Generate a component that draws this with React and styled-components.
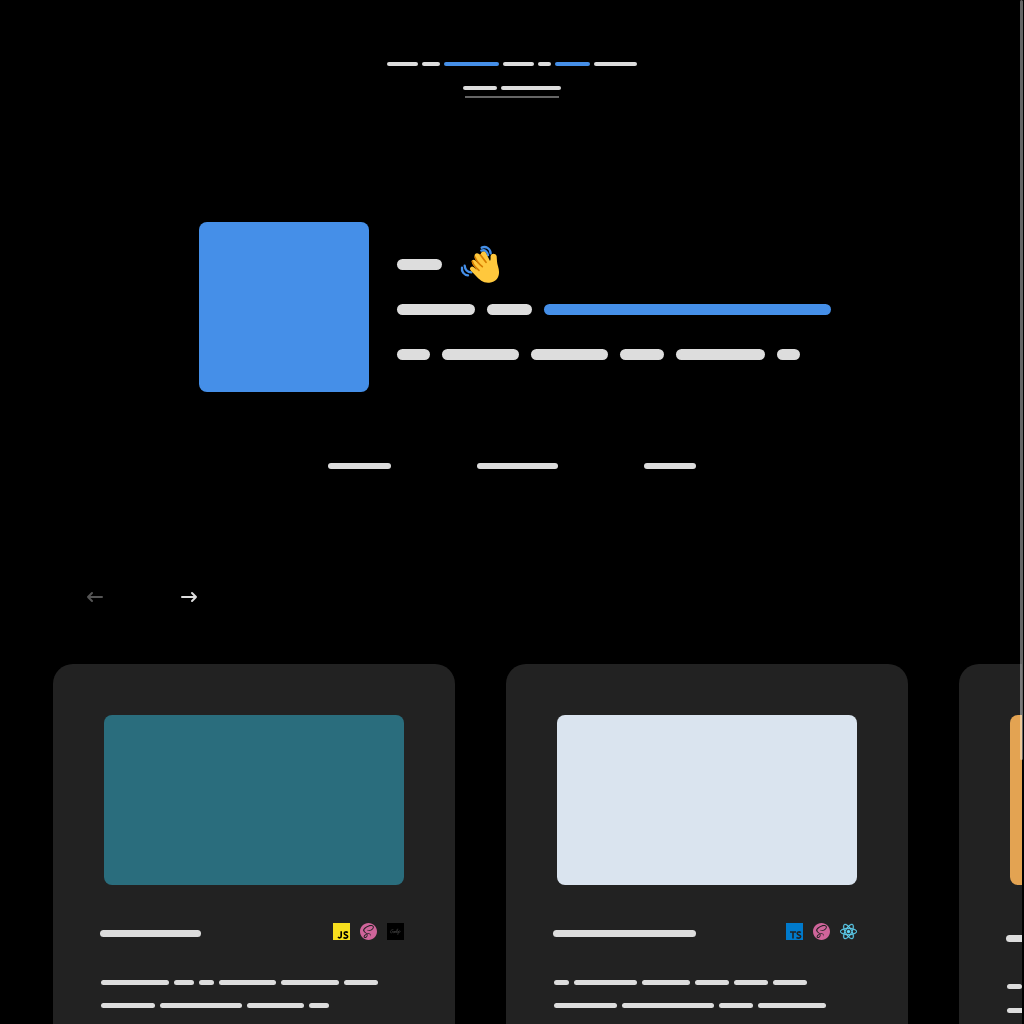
import React from "react";
import styled, { createGlobalStyle } from "styled-components";
import { SiSass, SiReact } from "react-icons/si";

const GlobalStyle = createGlobalStyle`
  * { box-sizing: border-box; }
  body {
    margin: 0;
    background: #000;
    color: #ddd;
    font-family: "Open Sans", sans-serif;
  }
`;

const Page = styled.div`
  height: 100vh;
  overflow: hidden;
  background: #000;
`;

const ScrollThumb = styled.div`
  position: fixed;
  top: 0;
  right: 1px;
  width: 3px;
  height: 760px;
  border-radius: 2px;
  background: rgba(255, 255, 255, 0.4);
  z-index: 2;
`;

const Bar = styled.span`
  display: block;
  flex: none;
  width: ${(p) => p.$w}px;
  height: ${(p) => p.$h}px;
  border-radius: ${(p) => p.$h}px;
  background: ${(p) => (p.$accent ? "#458fe8" : "#ddd")};
`;

const Line = styled.div`
  display: flex;
  align-items: center;
  gap: ${(p) => p.$gap}px;
`;

const Notice = styled.header`
  display: flex;
  flex-direction: column;
  align-items: center;
  gap: 20px;
  padding-top: 62px;
`;

const NoticeLink = styled.a`
  display: flex;
  flex-direction: column;
  align-items: center;
  gap: 6px;
  text-decoration: none;

  &::after {
    content: "";
    width: 94px;
    height: 2px;
    background: #666;
  }
`;

const Hero = styled.section`
  display: flex;
  justify-content: center;
  align-items: center;
  gap: 28px;
  margin-top: 124px;
`;

const Portrait = styled.div`
  flex: none;
  width: 170px;
  height: 170px;
  border-radius: 8px;
  background: #458fe8;
`;

const Intro = styled.div`
  display: flex;
  flex-direction: column;
  width: 428px;
  padding-top: 4px;
`;

const IntroLine = styled(Line)`
  height: 45px;
`;

const Wave = styled.svg`
  width: 40px;
  height: 40px;
  margin-left: 6px;
`;

const Nav = styled.nav`
  display: flex;
  justify-content: center;
  gap: 86px;
  margin-top: 71px;
`;

const NavLink = styled.a`
  display: block;
`;

const Arrows = styled.div`
  display: flex;
  gap: 70px;
  margin: 116px 0 0 83px;
`;

const ArrowButton = styled.button`
  display: flex;
  align-items: center;
  justify-content: center;
  width: 24px;
  height: 24px;
  padding: 0;
  border: 0;
  background: none;
  color: ${(p) => (p.disabled ? "#555" : "#ddd")};
  cursor: pointer;
`;

const Carousel = styled.main`
  display: flex;
  gap: 51px;
  margin: 55px 2px 0 0;
  padding-left: 53px;
  overflow: hidden;
`;

const Card = styled.article`
  flex: none;
  width: 402px;
  min-height: 520px;
  padding: 51px 47px;
  border-radius: 20px;
  background: #222;
`;

const Preview = styled.div`
  height: 170px;
  margin: 0 4px;
  border-radius: 8px;
  background: ${(p) => p.$color};
`;

const CardHead = styled.div`
  display: flex;
  justify-content: space-between;
  align-items: center;
  height: ${(p) => (p.$tall ? 27 : 17)}px;
  margin: 38px 4px 0 0;
`;

const CardTitle = styled.h2`
  margin: 0;
  padding-top: 3px;
`;

const Tech = styled.div`
  display: flex;
  gap: 10px;

  svg {
    display: block;
    width: 17px;
    height: 17px;
  }
`;

const Description = styled.div`
  display: flex;
  flex-direction: column;
  gap: ${(p) => (p.$loose ? 19 : 18)}px;
  margin: ${(p) => (p.$loose ? 34 : 40)}px 1px 0;
`;

function Bars({ widths, h, gap, accents = [] }) {
  return (
    <Line $gap={gap}>
      {widths.map((w, i) => (
        <Bar key={i} $w={w} $h={h} $accent={accents.includes(i)} />
      ))}
    </Line>
  );
}

function WavingHand() {
  return (
    <Wave viewBox="0 -3 120 120" fill="none" role="img" aria-label="Waving hand">
      <g stroke="#458fe8" strokeWidth="7" strokeLinecap="round">
        <path d="M65 8C77 2 91 10 92 25" />
        <path d="M64 17C75 13 82 20 84 30" />
        <path d="M6 68C4 80 12 90 24 91" />
        <path d="M14 62C15 73 22 82 34 82" />
      </g>
      <path
        d="M32 67C36 63 40 65 44 69L50 75L38 57C31 47 39 40 47 47L56 57L45 38C40 27 50 20 58 28L63 32C60 20 72 15 78 24L90 48C93 42 91 38 92 33C94 23 108 24 110 34C111 49 111 54 114 64C122 88 115 111 88 113C71 115 58 104 48 93L33 77C29 73 29 70 32 67Z"
        fill="#ffc83d"
      />
      <g stroke="#d67d00" strokeWidth="5" strokeLinecap="round">
        <path d="M61 29L78 52" />
        <path d="M45 36C49 49 57 57 67 65" />
        <path d="M37 49C39 61 48 68 57 76" />
      </g>
    </Wave>
  );
}

function Arrow({ back }) {
  return (
    <svg
      width="18"
      height="12"
      viewBox="0 0 18 12"
      fill="none"
      stroke="currentColor"
      strokeWidth="2"
      strokeLinecap="round"
      strokeLinejoin="round"
      aria-hidden="true"
    >
      <path d={back ? "M16 6H2M6 2L2 6L6 10" : "M2 6H16M12 2L16 6L12 10"} />
    </svg>
  );
}

const S_STROKE = "M14.8 9.6C13.6 8.6 11.2 8.6 11.2 10.2C11.2 12.2 14.7 11.6 14.7 13.6C14.7 15.5 11.8 15.5 10.5 14.3";

function JsLogo() {
  return (
    <svg viewBox="0 0 17 17" role="img" aria-label="JavaScript">
      <rect width="17" height="17" fill="#f7df1e" />
      <path d={`M8.2 8.2V13C8.2 15.2 5.9 15.3 5.1 13.9${S_STROKE}`} stroke="#000" strokeWidth="1.6" fill="none" />
    </svg>
  );
}

function TsLogo() {
  return (
    <svg viewBox="0 0 17 17" role="img" aria-label="TypeScript">
      <rect width="17" height="17" fill="#007acc" />
      <path d={`M4 9H10M7 9V15.6${S_STROKE}`} stroke="#222" strokeWidth="1.6" fill="none" />
    </svg>
  );
}

function GulpLogo() {
  return (
    <svg viewBox="0 0 17 17" role="img" aria-label="Gulp">
      <rect width="17" height="17" fill="#000" />
      <g stroke="#393939" strokeWidth="0.7" fill="none" strokeLinecap="round">
        <path d="M6 6.5C4 6 2.5 9.5 4 10C5.2 10 5.8 8.7 6 8C5.7 9.6 5.8 10.3 7 9.4L7.4 8V9.8L8.8 8V9.8C10 9 11 6.5 10.7 5.8C9.6 6.5 9.3 9.3 9.9 9.8L11.6 8L10.8 11.5M11.5 8.5C13 7 13.8 8 12.8 9.2L11.5 9.7" />
      </g>
    </svg>
  );
}

const icons = {
  js: <JsLogo />,
  ts: <TsLogo />,
  sass: <SiSass color="#cf649a" title="Sass" />,
  react: <SiReact color="#61dafb" stroke="#61dafb" strokeWidth="0.5" title="React" />,
  gulp: <GulpLogo />,
};

const projects = [
  {
    color: "#2a6d7d",
    title: 101,
    tech: ["js", "sass", "gulp"],
    lines: [[68, 20, 15, 57, 58, 34], [54, 82, 57, 20]],
  },
  {
    color: "#dae4ef",
    title: 143,
    tech: ["ts", "sass", "react"],
    lines: [[15, 63, 48, 34, 34, 34], [63, 92, 34, 68]],
  },
  {
    color: "#e3a352",
    title: 143,
    tech: [],
    tall: true,
    lines: [[15, 63, 48], [54, 82, 34]],
  },
];

export default function App() {
  return (
    <Page>
      <GlobalStyle />
      <ScrollThumb />
      <Notice>
        <Bars widths={[31, 18, 55, 31, 13, 35, 43]} h={4} gap={4} accents={[2, 5]} />
        <NoticeLink href="#details" aria-label="Details">
          <Bars widths={[34, 60]} h={4} gap={4} />
        </NoticeLink>
      </Notice>
      <Hero>
        <Portrait />
        <Intro>
          <IntroLine $gap={12}>
            <Bar $w={45} $h={11} />
            <WavingHand />
          </IntroLine>
          <IntroLine $gap={12}>
            <Bars widths={[78, 45, 287]} h={11} gap={12} accents={[2]} />
          </IntroLine>
          <IntroLine $gap={12}>
            <Bars widths={[33, 77, 77, 44, 89, 23]} h={11} gap={12} />
          </IntroLine>
        </Intro>
      </Hero>
      <Nav>
        {[63, 81, 52].map((w, i) => (
          <NavLink key={w} href={`#section-${i + 1}`} aria-label={`Section ${i + 1}`}>
            <Bar $w={w} $h={6} />
          </NavLink>
        ))}
      </Nav>
      <Arrows>
        <ArrowButton type="button" disabled aria-label="Previous projects">
          <Arrow back />
        </ArrowButton>
        <ArrowButton type="button" aria-label="Next projects">
          <Arrow />
        </ArrowButton>
      </Arrows>
      <Carousel>
        {projects.map((p) => (
          <Card key={p.color}>
            <Preview $color={p.color} />
            <CardHead $tall={p.tall}>
              <CardTitle>
                <Bar $w={p.title} $h={7} />
              </CardTitle>
              <Tech>
                {p.tech.map((t) => (
                  <React.Fragment key={t}>{icons[t]}</React.Fragment>
                ))}
              </Tech>
            </CardHead>
            <Description $loose={p.tall}>
              {p.lines.map((widths, i) => (
                <Bars key={i} widths={widths} h={5} gap={5} />
              ))}
            </Description>
          </Card>
        ))}
      </Carousel>
    </Page>
  );
}
